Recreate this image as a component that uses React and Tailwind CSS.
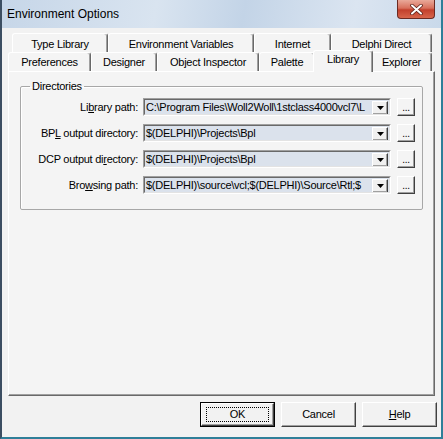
import React from 'react';

const font = { fontFamily: '"Liberation Sans", Arial, sans-serif' };

const row1 = [
    { label: 'Type Library', w: 'w-[96px]' },
    { label: 'Environment Variables', w: 'w-[146px]' },
    { label: 'Internet', w: 'w-[77px]' },
    { label: 'Delphi Direct', w: 'w-[101px]' },
];

const row2 = [
    { label: 'Preferences', w: 'w-[83px]' },
    { label: 'Designer', w: 'w-[66px]' },
    { label: 'Object Inspector', w: 'w-[102px]' },
    { label: 'Palette', w: 'w-[56px]' },
    { label: 'Library', w: 'w-[60px]', selected: true },
    { label: 'Explorer', w: 'w-[61px]' },
];

function Tab({ label, w, selected, back }) {
    if (selected) {
        return (
            <div
                className={`${w} relative top-[1px] z-10 -mx-[2px] flex h-[22px] shrink-0 items-center justify-center rounded-t-[3px] border-t border-l border-r border-t-white border-l-white border-r-[#696969] bg-[#f4f4f4] pb-[4px] shadow-[inset_-1px_0_#a0a0a0]`}
            >
                {label}
            </div>
        );
    }
    return (
        <div
            className={`${w} flex h-[19px] shrink-0 items-center justify-center rounded-t-[3px] border-t border-l border-r border-t-white border-l-white border-r-[#696969] bg-[#f4f4f4] shadow-[inset_-1px_0_#a0a0a0] ${back ? 'pt-[2px]' : 'pt-[1px]'}`}
        >
            {label}
        </div>
    );
}

function DropArrow() {
    return (
        <div className="mr-[1px] mt-[1px] flex h-[14px] w-[16px] shrink-0 items-center justify-center border border-t-white border-l-white border-r-[#404040] border-b-[#404040] bg-[#f0f0f0] shadow-[inset_-1px_-1px_#a0a0a0]">
            <svg width="7" height="4" viewBox="0 0 7 4">
                <path d="M0 0h7L3.5 4z" fill="#000" />
            </svg>
        </div>
    );
}

function PathRow({ label, value }) {
    return (
        <div className="flex h-[18px] items-center">
            <div className="w-[117px] whitespace-nowrap text-right">{label}</div>
            <div className="ml-[5px] flex h-[18px] w-[248px] border border-t-[#a0a0a0] border-l-[#a0a0a0] border-r-white border-b-white">
                <div className="flex flex-1 overflow-hidden border border-t-[#696969] border-l-[#696969] border-r-[#e3e3e3] border-b-[#e3e3e3] bg-[#dbe2ec]">
                    <div className="flex-1 overflow-hidden whitespace-nowrap pl-[1px] leading-[14px]">{value}</div>
                    <DropArrow />
                </div>
            </div>
            <div className="ml-[6px] flex h-[18px] w-[18px] items-end justify-center border border-t-white border-l-white border-r-[#404040] border-b-[#404040] pb-[2px] text-[10px] leading-[10px] shadow-[inset_-1px_-1px_#a0a0a0]">
                ...
            </div>
        </div>
    );
}

function DlgButton({ children, isDefault }) {
    if (isDefault) {
        return (
            <div className="h-[25px] w-[75px] border border-black">
                <div className="flex h-full w-full items-center justify-center border border-t-white border-l-white border-r-[#404040] border-b-[#404040] shadow-[inset_-1px_-1px_#a0a0a0]">
                    <div className="flex h-[15px] w-[63px] items-center justify-center border border-dotted border-black">
                        {children}
                    </div>
                </div>
            </div>
        );
    }
    return (
        <div className="flex h-[25px] w-[75px] items-center justify-center border border-t-white border-l-white border-r-[#404040] border-b-[#404040] shadow-[inset_-1px_-1px_#a0a0a0]">
            {children}
        </div>
    );
}

export default function App() {
    return (
        <div
            className="flex h-[439px] w-[443px] flex-col overflow-hidden border-l-2 border-r-2 border-b-2 border-l-[#3c4e62] border-r-[#2f7f99] border-b-[#2f7f99] bg-[#f2f2f2] text-[11px] tracking-[-0.25px] text-black"
            style={font}
        >
            {/* title bar */}
            <div className="flex h-[28px] shrink-0 items-start justify-between bg-[linear-gradient(100deg,#c6d6e8_0%,#d9e4f0_35%,#c3d4e7_55%,#dbe5f1_80%,#c9d9ea_100%)]">
                <div className="pl-[5px] pt-[7px] text-[12px] leading-[15px] tracking-normal">Environment Options</div>
                <div className="mr-[6px] flex h-[19px] w-[38px] items-center justify-center rounded-b-[4px] border border-t-0 border-[#6b2a22] bg-[linear-gradient(180deg,#e9a999_0%,#d8705c_45%,#c2402c_55%,#d7654b_100%)]">
                    <svg width="13" height="11" viewBox="0 0 13 11">
                        <path d="M2 1.5l9 8M11 1.5l-9 8" stroke="#5a2018" strokeWidth="3.6" strokeLinecap="round" />
                        <path d="M2 1.5l9 8M11 1.5l-9 8" stroke="#fff" strokeWidth="2" strokeLinecap="round" />
                    </svg>
                </div>
            </div>

            {/* tab control */}
            <div className="ml-[6px] mt-[5px] w-[427px]">
                <div className="flex pl-[4px]">
                    {row1.map((t) => (
                        <Tab key={t.label} {...t} back />
                    ))}
                </div>
                <div className="flex h-[19px] items-end">
                    {row2.map((t) => (
                        <Tab key={t.label} {...t} />
                    ))}
                </div>
                <div className="h-[325px] border border-t-white border-l-white border-r-[#696969] border-b-[#696969] bg-[#f4f4f4] shadow-[inset_-1px_-1px_#a0a0a0]">
                    <fieldset className="ml-[11px] mt-[8px] w-[403px] rounded-[2px] border border-[#a7a7a7] pb-[15px] pt-[5px] shadow-[inset_1px_1px_#fff]">
                        <legend className="ml-[9px] px-[2px] leading-[13px]">Directories</legend>
                        <div className="flex flex-col gap-[8px]">
                            <PathRow
                                label={<>Li<u>b</u>rary path:</>}
                                value={'C:\\Program Files\\Woll2Woll\\1stclass4000vcl7\\L'}
                            />
                            <PathRow
                                label={<>BP<u>L</u> output directory:</>}
                                value={'$(DELPHI)\\Projects\\Bpl'}
                            />
                            <PathRow
                                label={<>DCP output di<u>r</u>ectory:</>}
                                value={'$(DELPHI)\\Projects\\Bpl'}
                            />
                            <PathRow
                                label={<>Bro<u>w</u>sing path:</>}
                                value={'$(DELPHI)\\source\\vcl;$(DELPHI)\\Source\\Rtl;$'}
                            />
                        </div>
                    </fieldset>
                </div>
            </div>

            {/* buttons */}
            <div className="mt-[6px] flex justify-end gap-[6px] pr-[4px]">
                <DlgButton isDefault>OK</DlgButton>
                <DlgButton>Cancel</DlgButton>
                <DlgButton>
                    <span>
                        <u>H</u>elp
                    </span>
                </DlgButton>
            </div>
        </div>
    );
}
